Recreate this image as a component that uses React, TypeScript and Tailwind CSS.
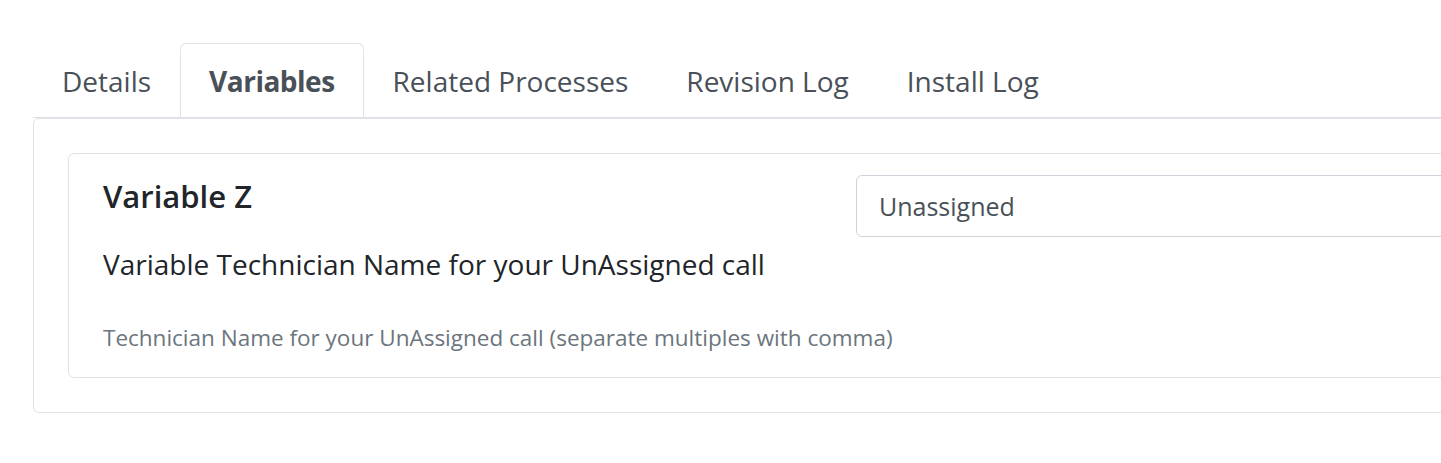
const tabs = ["Details", "Variables", "Related Processes", "Revision Log", "Install Log"];

export default function App() {
  const active = "Variables";

  return (
    <div
      className="w-full h-[463px] overflow-hidden bg-white text-[#212529]"
      style={{ fontFamily: '"Open Sans", "Noto Sans", sans-serif' }}
    >
      <div className="w-[1640px] pt-[43px] pl-[33px]">
        {/* Tabs */}
        <ul className="flex border-b border-[#dee2e6]">
          {tabs.map((tab) => (
            <li key={tab}>
              <a
                className={`flex h-[74px] items-center px-[28px] text-[28px] leading-[38px] text-[#495057] border border-b-0 rounded-t-md ${
                  tab === active
                    ? "border-[#dee2e6] bg-white font-bold tracking-[-0.5px]"
                    : "border-transparent"
                }`}
              >
                {tab}
              </a>
            </li>
          ))}
        </ul>

        {/* Tab panel */}
        <div className="border border-[#dee2e6] rounded-md p-[34px]">
          <div className="border border-[#dee2e6] rounded-md px-[34px] pt-[21px] pb-[23px]">
            <div className="grid grid-cols-[753px_1fr]">
              <div className="flex flex-col">
                <h5 className="text-[31px] leading-[42px] font-semibold text-[#212529]">Variable Z</h5>
                <p className="mt-[27px] text-[28px] leading-[40px] text-[#212529] whitespace-nowrap">
                  Variable Technician Name for your UnAssigned call
                </p>
                <small className="mt-[38px] text-[22.5px] leading-[32px] text-[#6c757d] whitespace-nowrap">
                  Technician Name for your UnAssigned call (separate multiples with comma)
                </small>
              </div>
              <div>
                <input
                  type="text"
                  defaultValue="Unassigned"
                  className="w-full h-[62px] border border-[#ced4da] rounded-md px-[22px] text-[25px] text-[#495057] outline-none"
                  style={{ fontFamily: '"Open Sans", "Noto Sans", sans-serif' }}
                />
              </div>
            </div>
          </div>
        </div>
      </div>
    </div>
  );
}
